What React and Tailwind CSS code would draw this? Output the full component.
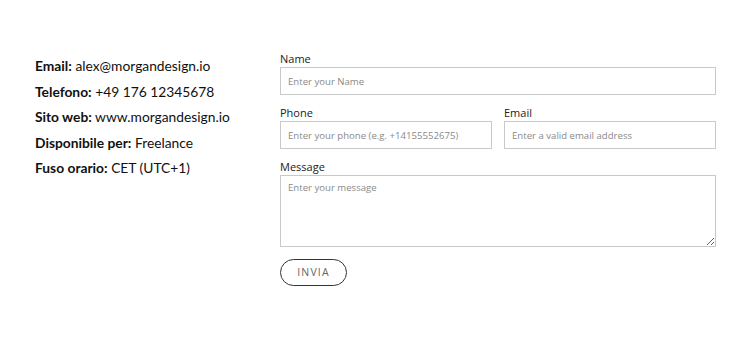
const info = [
  ["Email:", "alex@morgandesign.io"],
  ["Telefono:", "+49 176 12345678"],
  ["Sito web:", "www.morgandesign.io"],
  ["Disponibile per:", "Freelance"],
  ["Fuso orario:", "CET (UTC+1)"],
];

const inputCls =
  "w-full h-[28px] border border-[#c9c9c9] bg-white px-[7px] text-[9.6px] text-[#333] placeholder:text-[#8a8a8a] outline-none";

const App = () => {
  return (
    <div className="w-[750px] h-[352px] bg-white flex pl-[35px] pt-[53px] font-['Open_Sans',sans-serif]">
      <div className="w-[245px] flex flex-col gap-[8px] pt-[4px] font-['Lato',sans-serif] text-[13.8px] text-[#111]">
        {info.map(([k, v], i) => (
          <div key={i} className="h-[17.5px] leading-[17.5px] whitespace-nowrap">
            <span className="font-bold">{k}</span> {v}
          </div>
        ))}
      </div>
      <div className="w-[436px] flex flex-col">
        <label className="text-[11px] leading-[12px] text-[#222] mb-[2px]">Name</label>
        <input className={inputCls} placeholder="Enter your Name" />
        <div className="flex gap-[12px] mt-[12px]">
          <div className="flex-1 flex flex-col">
            <label className="text-[11px] leading-[12px] text-[#222] mb-[2px]">Phone</label>
            <input className={inputCls} placeholder="Enter your phone (e.g. +14155552675)" />
          </div>
          <div className="flex-1 flex flex-col">
            <label className="text-[11px] leading-[12px] text-[#222] mb-[2px]">Email</label>
            <input className={inputCls} placeholder="Enter a valid email address" />
          </div>
        </div>
        <label className="text-[11px] leading-[12px] text-[#222] mb-[2px] mt-[12px]">Message</label>
        <textarea
          className="w-full h-[72px] border border-[#c9c9c9] bg-white px-[7px] py-[5px] text-[9.6px] text-[#333] placeholder:text-[#8a8a8a] outline-none"
          placeholder="Enter your message"
        />
        <button className="mt-[12px] w-[67px] h-[27px] rounded-full border-[1.5px] border-[#333] text-[10.5px] tracking-[1.2px] text-[#666] bg-white font-['Open_Sans',sans-serif]">
          INVIA
        </button>
      </div>
    </div>
  );
};

export default App;
